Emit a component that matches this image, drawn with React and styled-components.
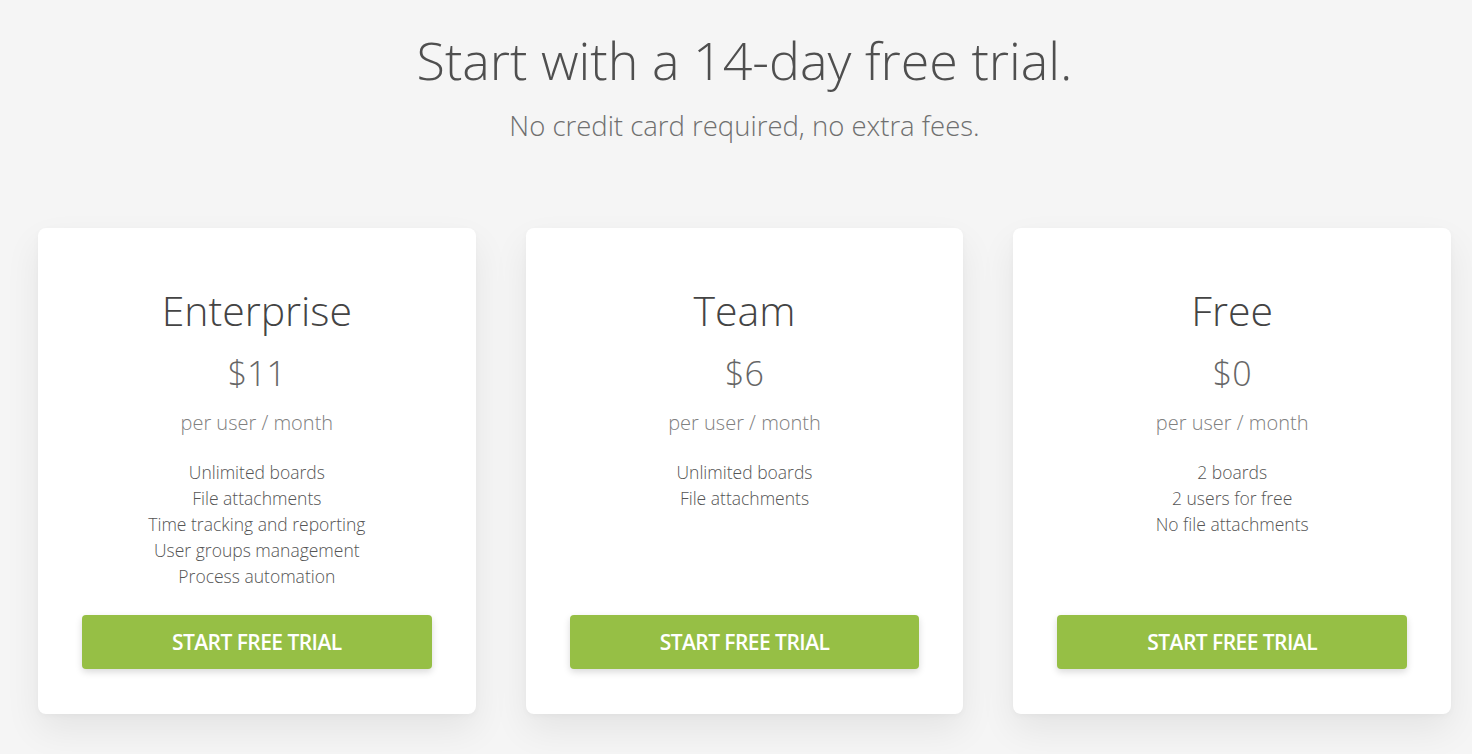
import React from "react";
import styled, { createGlobalStyle } from "styled-components";

const Global = createGlobalStyle`
  html, body { margin: 0; padding: 0; background: #f5f5f5; }
  body { font-family: "Open Sans", "Liberation Sans", sans-serif; -webkit-font-smoothing: antialiased; }
`;

const Page = styled.main`
  padding: 24px 21px 40px 38px;
  background: #f5f5f5;
`;

const Header = styled.header`
  text-align: center;
`;

const Title = styled.h1`
  margin: 0;
  font-weight: 300;
  font-size: 52px;
  line-height: 72px;
  letter-spacing: 0;
  color: #4f4f4f;
`;

const Subtitle = styled.p`
  margin: 12px 0 0;
  font-weight: 300;
  font-size: 27.5px;
  line-height: 36px;
  color: #6f6f6f;
`;

const Grid = styled.section`
  display: grid;
  grid-template-columns: repeat(3, 1fr);
  gap: 50px;
  margin-top: 84px;
`;

const Card = styled.article`
  display: flex;
  flex-direction: column;
  align-items: center;
  background: #fff;
  border-radius: 8px;
  padding: 58px 44px 45px;
  box-shadow: 0 16px 36px rgba(0, 0, 0, 0.07), 0 2px 6px rgba(0, 0, 0, 0.03);
  text-align: center;
`;

const PlanName = styled.h2`
  margin: 0;
  font-weight: 300;
  font-size: 41px;
  line-height: 48px;
  color: #444;
`;

const Price = styled.div`
  margin-top: 19px;
  font-weight: 300;
  font-size: 34px;
  line-height: 40px;
  color: #666;
`;

const Period = styled.div`
  margin-top: 16px;
  font-weight: 300;
  font-size: 20px;
  line-height: 28px;
  color: #808080;
`;

const Features = styled.ul`
  list-style: none;
  margin: 22px 0 26px;
  padding: 0;
  flex: 1;
`;

const Feature = styled.li`
  font-weight: 300;
  font-size: 17.5px;
  line-height: 26px;
  color: #555;
`;

const Button = styled.button`
  width: 100%;
  height: 54px;
  border: none;
  border-radius: 4px;
  background: #96bf45;
  color: #fff;
  font-family: "Open Sans", "Liberation Sans", sans-serif;
  font-weight: 600;
  font-size: 21px;
  letter-spacing: -0.55px;
  text-transform: uppercase;
  box-shadow: 0 3px 7px rgba(0, 0, 0, 0.15);
  cursor: pointer;
`;

const plans = [
  {
    name: "Enterprise",
    price: "$11",
    features: [
      "Unlimited boards",
      "File attachments",
      "Time tracking and reporting",
      "User groups management",
      "Process automation",
    ],
  },
  { name: "Team", price: "$6", features: ["Unlimited boards", "File attachments"] },
  { name: "Free", price: "$0", features: ["2 boards", "2 users for free", "No file attachments"] },
];

export default function App() {
  return (
    <>
      <Global />
      <Page>
        <Header>
          <Title>Start with a 14-day free trial.</Title>
          <Subtitle>No credit card required, no extra fees.</Subtitle>
        </Header>
        <Grid>
          {plans.map((p) => (
            <Card key={p.name}>
              <PlanName>{p.name}</PlanName>
              <Price>{p.price}</Price>
              <Period>per user / month</Period>
              <Features>
                {p.features.map((f) => (
                  <Feature key={f}>{f}</Feature>
                ))}
              </Features>
              <Button>Start free trial</Button>
            </Card>
          ))}
        </Grid>
      </Page>
    </>
  );
}
